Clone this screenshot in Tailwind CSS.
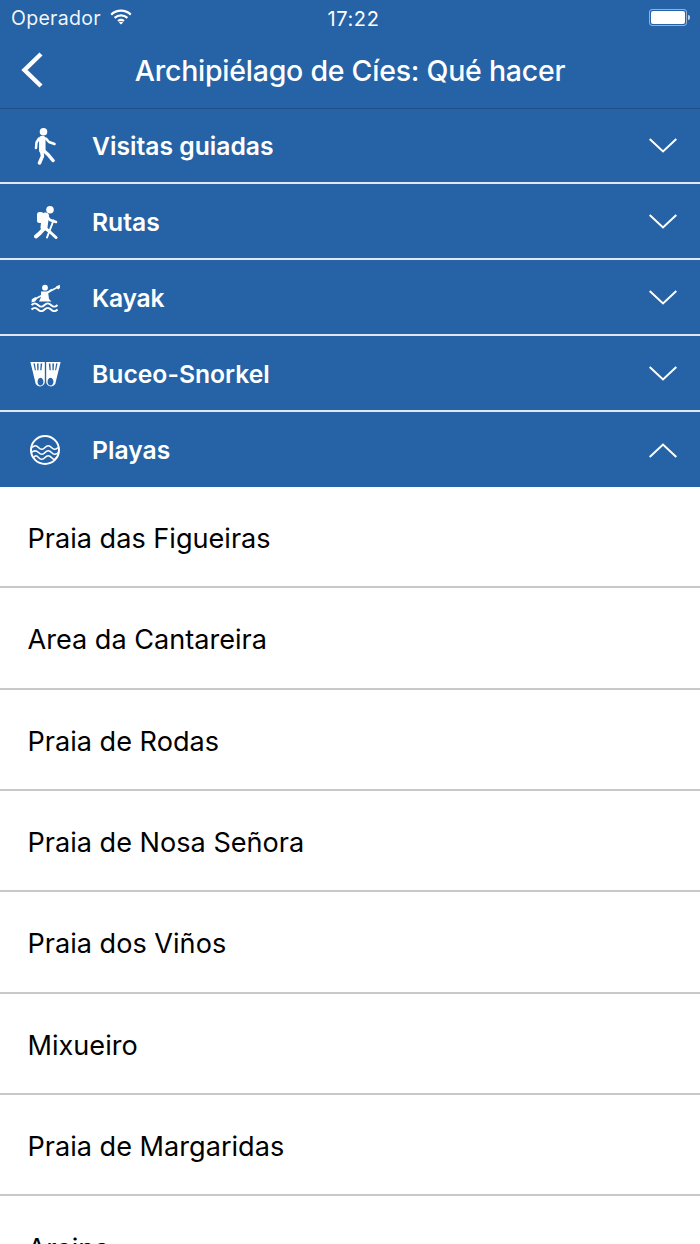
<!doctype html>
<html lang="es">
<head>
<meta charset="utf-8">
<script src="https://cdn.jsdelivr.net/npm/@tailwindcss/browser@4"></script>
<title>Qué hacer</title>
</head>
<body class="m-0 bg-white">
<div class="w-[700px] h-[1244px] overflow-hidden font-['Inter','Liberation_Sans',sans-serif] bg-white">
  <div class="bg-[#2562a6] text-white h-[109px] border-b border-[#1e4f87] flex flex-col">
    <div class="h-[36px] pt-[2px] relative flex items-center pl-[11px] pr-[10px]">
      <span class="text-[19.5px] leading-none tracking-[0.3px] text-white/95">Operador</span>
      <svg class="ml-[9px] -mt-[4px]" width="22" height="16" viewBox="0 0 22 16" fill="none" stroke="#fff" stroke-width="2.200"><path d="M1.200 5.600C6.800 .4 15.200 .4 20.800 5.600"/><path d="M4.600 8.900c3.700-3.300 9.100-3.300 12.800 0"/><path d="M8 12c1.800-1.400 4.200-1.400 6 0"/><path d="M11 15.600 8.800 13.400c1.300-.9 3.100-.9 4.400 0z" fill="#fff" stroke="none"/></svg>
      <span class="absolute left-[7px] right-0 text-center text-[20px] leading-none tracking-[0.6px]">17:22</span>
      <div class="ml-auto flex items-center -mt-[4px]">
        <div class="w-[38px] h-[17px] rounded-[3px] border border-white/50 p-[1px]"><div class="w-full h-full rounded-[2px] bg-white"></div></div>
        <div class="w-[2px] h-[5px] bg-white/70 rounded-r-[2px] ml-[1px]"></div>
      </div>
    </div>
    <div class="flex-1 relative flex items-center justify-center -mt-[2px]">
      <svg class="absolute left-[20px] top-[17px]" width="24" height="38" viewBox="0 0 24 38" fill="none" stroke="#fff" stroke-width="4.400"><path d="M21 3 4.500 19 21 35"/></svg>
      <h1 class="text-[28.5px] font-medium leading-none tracking-[-0.25px]">Archipiélago de Cíes: Qué hacer</h1>
    </div>
  </div>

  <div class="bg-[#2562a6] text-white">
    <div class="h-[75px] pt-[1px] border-b-2 border-[#dfe8f2] flex items-center pl-[28px] pr-[23px]">
      <div class="w-[34px] flex justify-center">
        <svg width="24" height="38" viewBox="0 0 24 38" fill="none" stroke="#fff" stroke-linecap="round" stroke-linejoin="round"><circle cx="10.500" cy="4.700" r="3.800" fill="#fff" stroke="none"/><path d="M6 11.500 3.500 15.500 3 21M13 11.500l3 3.500 5.500 2" stroke-width="2.500"/><path d="M9.300 12V23" stroke-width="6.500"/><path d="M8.500 24 9.500 29 6.500 36M11 24l4 3.500 5 6" stroke-width="3.500"/></svg>
      </div>
      <span class="ml-[30px] text-[24.7px] font-semibold leading-none">Visitas guiadas</span>
      <svg class="ml-auto -mt-[2px]" width="28" height="15" viewBox="0 0 28 15" fill="none" stroke="#fff" stroke-width="2"><path d="M.7 1 14 13.500 27.300 1"/></svg>
    </div>
    <div class="h-[76px] pt-[2px] border-b-2 border-[#dfe8f2] flex items-center pl-[28px] pr-[23px]">
      <div class="w-[34px] flex justify-center">
        <svg width="26" height="34" viewBox="0 0 26 34" fill="none" stroke="#fff" stroke-linecap="round" stroke-linejoin="round"><circle cx="18" cy="4.700" r="3.800" fill="#fff" stroke="none"/><rect x="5" y="7" width="6.500" height="11" rx="2.500" fill="#fff" stroke="none"/><path d="M13.500 11 12 22" stroke-width="7"/><path d="M14 10l4 5 6 2" stroke-width="2.500"/><path d="M12.500 23 8 28 4 31.500" stroke-width="4"/><path d="M13 23l5 4 6 5.500" stroke-width="3"/><path d="M21.500 15.500 15 32.500" stroke-width="2"/></svg>
      </div>
      <span class="ml-[30px] text-[24.7px] font-semibold leading-none">Rutas</span>
      <svg class="ml-auto -mt-[2px]" width="28" height="15" viewBox="0 0 28 15" fill="none" stroke="#fff" stroke-width="2"><path d="M.7 1 14 13.500 27.300 1"/></svg>
    </div>
    <div class="h-[76px] pt-[2px] border-b-2 border-[#dfe8f2] flex items-center pl-[28px] pr-[23px]">
      <div class="w-[34px] flex justify-center">
        <svg width="30" height="28" viewBox="0 0 30 28" fill="#fff"><circle cx="15" cy="3.700" r="2.900"/><path d="M11 7.500h7l1 7.500 2.500 2.500H9l2-4.500z"/><path d="M29 2.500 5 15" stroke="#fff" stroke-width="1.600"/><path d="M29.800 .8 26 2.500l2 3 2-1.500zM5.500 13 1.800 15.200 1.500 18.500 5 17.500 7 15z"/><path d="M17 9l5-3.500" stroke="#fff" stroke-width="2"/><path d="M1.500 21c2.500-2.400 4-2.400 6.500 0s4 2.400 6.500 0 4-2.400 6.500 0 4 2.400 6.500 0M1.500 25.500c2.500-2.400 4-2.400 6.500 0s4 2.400 6.500 0 4-2.400 6.500 0 4 2.400 6.500 0" fill="none" stroke="#fff" stroke-width="2"/></svg>
      </div>
      <span class="ml-[30px] text-[24.7px] font-semibold leading-none tracking-[-0.3px]">Kayak</span>
      <svg class="ml-auto -mt-[2px]" width="28" height="15" viewBox="0 0 28 15" fill="none" stroke="#fff" stroke-width="2"><path d="M.7 1 14 13.500 27.300 1"/></svg>
    </div>
    <div class="h-[76px] pt-[2px] border-b-2 border-[#dfe8f2] flex items-center pl-[28px] pr-[23px]">
      <div class="w-[34px] flex justify-center">
        <svg width="31" height="26" viewBox="0 0 32 27" fill="#fff"><path fill-rule="evenodd" d="M.3 1H15.300V21.500a5 5 0 0 1-10 0zM10.800 17.500a3 4 0 1 0 .01 0zM3.500 2.500H5L6 9.500H5zM7.200 2.500H8.800V9.500H7.500zM11 2.500H12.600L11.800 9.500H10.500z"/><path fill-rule="evenodd" d="M31.700 1H16.700V21.500a5 5 0 0 0 10 0zM21.200 17.500a3 4 0 1 1-.01 0zM28.500 2.500H27L26 9.500H27zM24.800 2.500H23.200V9.500H24.500zM21 2.500H19.400L20.200 9.500H21.500z"/></svg>
      </div>
      <span class="ml-[30px] text-[24.7px] font-semibold leading-none">Buceo-Snorkel</span>
      <svg class="ml-auto -mt-[2px]" width="28" height="15" viewBox="0 0 28 15" fill="none" stroke="#fff" stroke-width="2"><path d="M.7 1 14 13.500 27.300 1"/></svg>
    </div>
    <div class="h-[75px] pt-[1px] flex items-center pl-[28px] pr-[23px]">
      <div class="w-[34px] flex justify-center">
        <svg width="30" height="30" viewBox="0 0 30 30" fill="none" stroke="#fff"><circle cx="15" cy="15" r="14" stroke-width="2"/><path d="M2 12.500c2.600-2.400 4.400-2.400 6.500 0s4.400 2.400 6.500 0 4.400-2.400 6.500 0 4.400 2.400 6.500 0M1.500 17.500c2.600-2.400 4.400-2.400 7 0s4.400 2.400 6.500 0 4.400-2.400 6.500 0 4.400 2.400 7 0M3.500 22.500c2-2.400 3-2.400 5 0s4.400 2.400 6.500 0 4.400-2.400 6.500 0 3 2.400 5 0" stroke-width="1.600"/></svg>
      </div>
      <span class="ml-[30px] text-[24.7px] font-semibold leading-none">Playas</span>
      <svg class="ml-auto" width="28" height="15" viewBox="0 0 28 15" fill="none" stroke="#fff" stroke-width="2"><path d="M.7 14 14 1.500 27.300 14"/></svg>
    </div>
  </div>

  <ul class="text-black text-[27.100px] leading-none font-normal">
    <li class="h-[101.330px] pt-[4px] border-b-2 border-[#c8c8c8] flex items-center pl-[27.500px]">Praia das Figueiras</li>
    <li class="h-[101.330px] pt-[4px] border-b-2 border-[#c8c8c8] flex items-center pl-[27.500px]">Area da Cantareira</li>
    <li class="h-[101.330px] pt-[4px] border-b-2 border-[#c8c8c8] flex items-center pl-[27.500px]">Praia de Rodas</li>
    <li class="h-[101.330px] pt-[4px] border-b-2 border-[#c8c8c8] flex items-center pl-[27.500px]">Praia de Nosa Señora</li>
    <li class="h-[101.330px] pt-[4px] border-b-2 border-[#c8c8c8] flex items-center pl-[27.500px]">Praia dos Viños</li>
    <li class="h-[101.330px] pt-[4px] border-b-2 border-[#c8c8c8] flex items-center pl-[27.500px]">Mixueiro</li>
    <li class="h-[101.330px] pt-[4px] border-b-2 border-[#c8c8c8] flex items-center pl-[27.500px]">Praia de Margaridas</li>
    <li class="h-[101.330px] pt-[4px] flex items-center pl-[27.500px]">Areina</li>
  </ul>
</div>
</body>
</html>
